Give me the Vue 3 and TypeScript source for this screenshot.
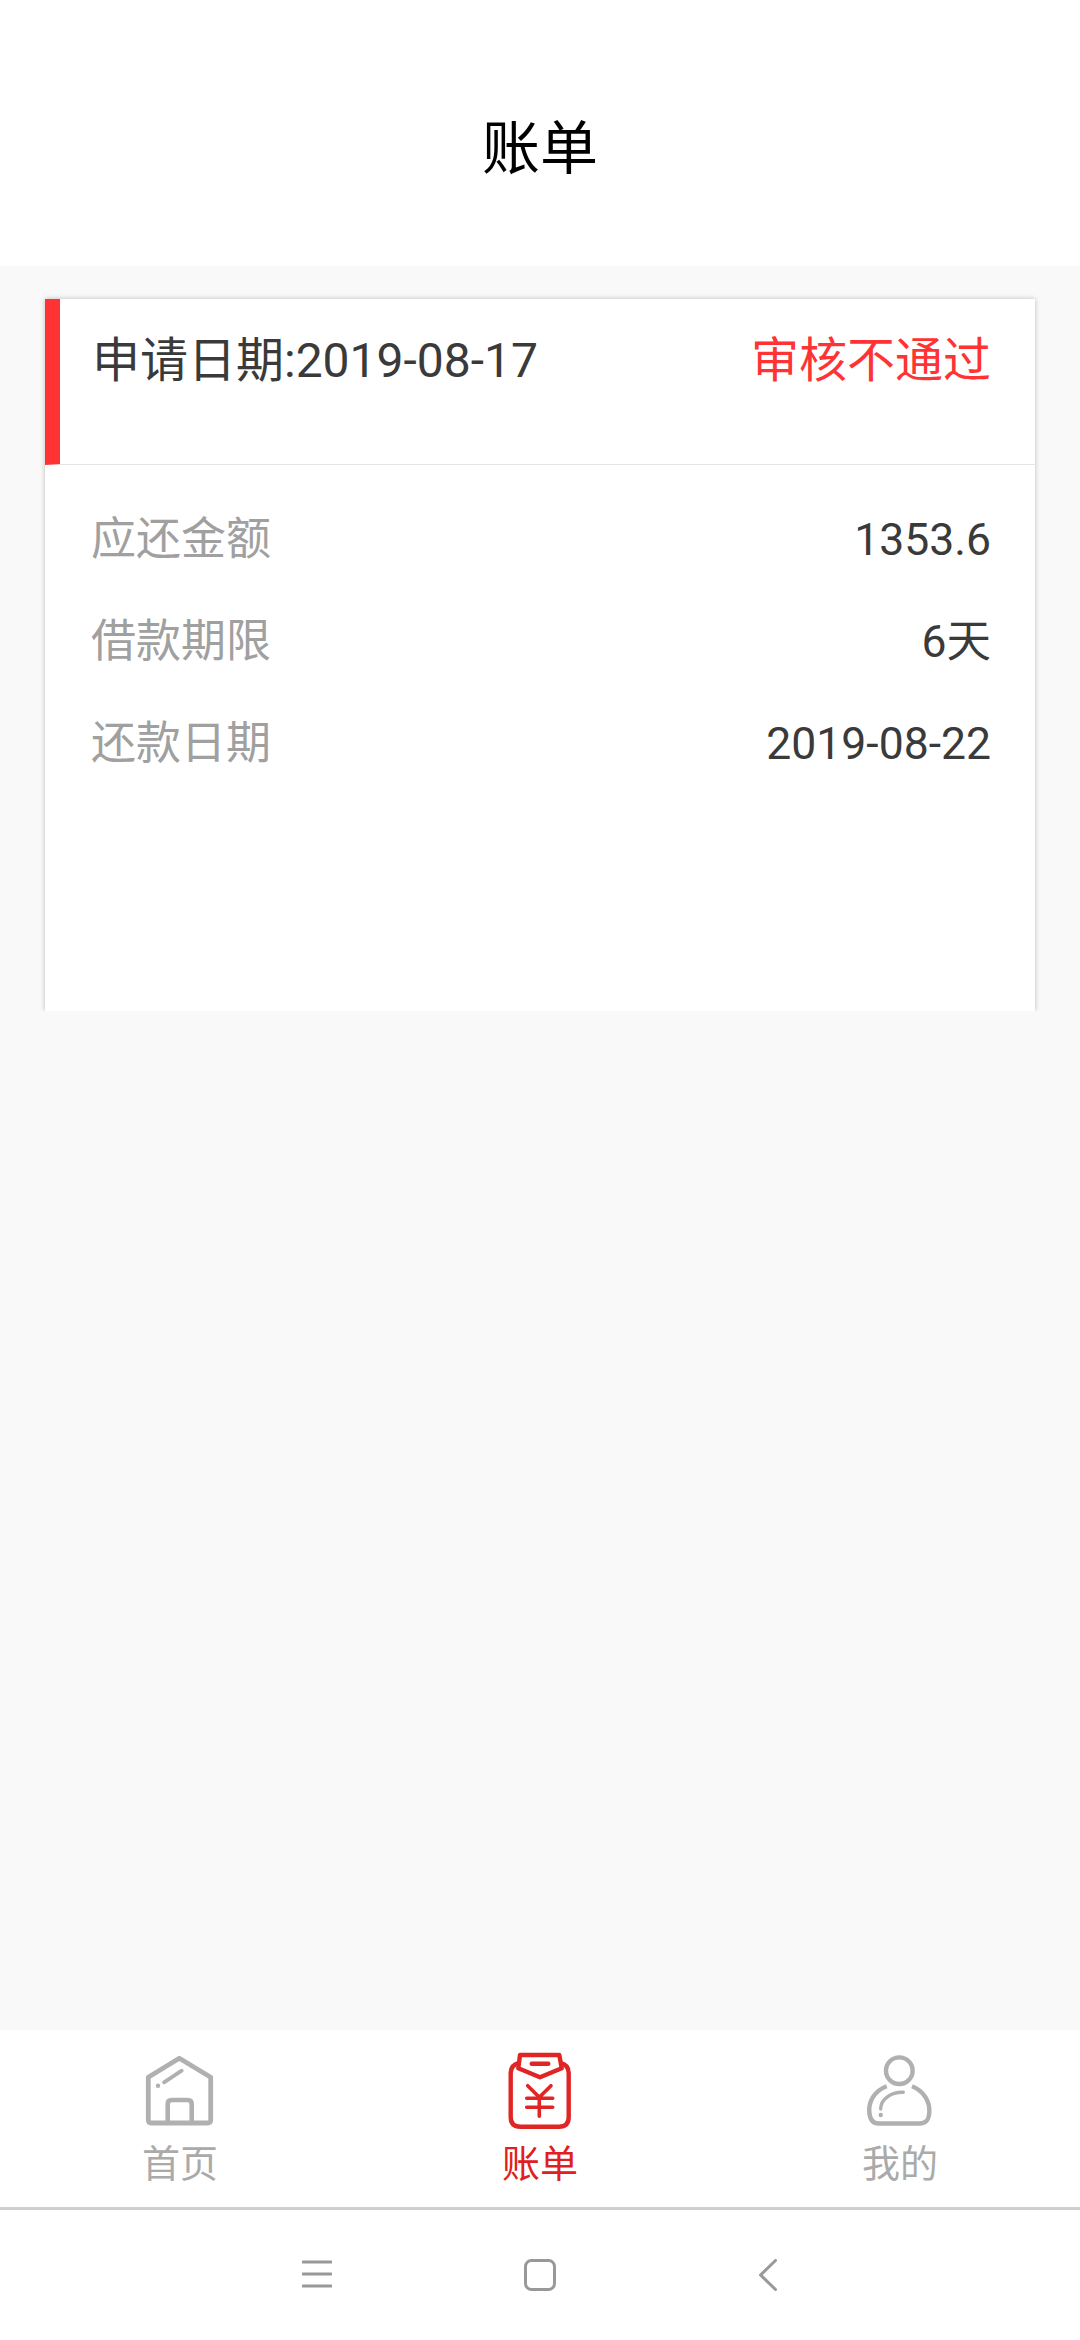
<script setup lang="ts">
const rows = [
  { label: '应还金额', value: '1353.6' },
  { label: '借款期限', value: '6天' },
  { label: '还款日期', value: '2019-08-22' },
]
</script>

<template>
  <div class="page">
    <header class="top">账单</header>
    <main class="content">
      <section class="card">
        <div class="card-head">
          <span class="date">申请日期:2019-08-17</span>
          <span class="status">审核不通过</span>
        </div>
        <div class="card-body">
          <div v-for="r in rows" :key="r.label" class="row">
            <span class="label">{{ r.label }}</span>
            <span class="value">{{ r.value }}</span>
          </div>
        </div>
      </section>
    </main>
    <nav class="tabs">
      <div class="tab">
        <svg class="icon grey" viewBox="0 0 80 80" fill="none">
          <path d="M39.3 9.3 L8.3 28.3 V71 Q8.3 74 11.3 74 H67.7 Q70.7 74 70.7 71 V28.3 Z" stroke-width="4.8" stroke-linejoin="round" />
          <path d="M27.7 74 V55 Q27.7 51 31.7 51 H47.7 Q51.7 51 51.7 55 V74" stroke-width="4.6" />
          <path d="M24 33.3 L41.7 21.7" stroke-width="3.8" stroke-linecap="round" />
          <circle cx="18" cy="36.7" r="2.2" class="dot" />
        </svg>
        <span class="tab-label">首页</span>
      </div>
      <div class="tab active">
        <svg class="icon red" viewBox="0 0 80 80" fill="none">
          <path d="M19 14 Q10.7 16 10.7 24 V68 Q10.7 77.7 20.4 77.7 H59 Q68.7 77.7 68.7 68 V24 Q68.7 16 60.5 14" stroke-width="4.4" />
          <path d="M20 6 H59.3 L61.7 19.3 L40 28.3 L18.3 19.3 Z" stroke-width="4.4" stroke-linejoin="round" />
          <path d="M31.7 14.7 H48.3" stroke-width="4.4" stroke-linecap="round" />
          <path d="M27.7 36.7 L39.3 48.3 L51 36.7 M26.7 49.3 H52.7 M26.7 58.3 H52.7 M39.3 48.3 V67.3" stroke-width="3.6" stroke-linecap="round" />
        </svg>
        <span class="tab-label">账单</span>
      </div>
      <div class="tab">
        <svg class="icon grey" viewBox="0 0 80 80" fill="none">
          <circle cx="39.3" cy="21.7" r="13.3" stroke-width="4.4" />
          <path d="M26.7 37.3 C14 42 8.5 53 9.3 63 C9.8 71 13 74.5 19 74.5 H59.5 C66 74.5 69 71 69.3 63 C70 53 64 42 52 37.3" stroke-width="4.4" />
          <path d="M20.7 60 C20.7 50 31 43 43.3 43.3" stroke-width="3.4" stroke-linecap="round" />
          <circle cx="20.7" cy="66" r="2.2" class="dot" />
        </svg>
        <span class="tab-label">我的</span>
      </div>
    </nav>
    <div class="sysnav">
      <svg class="sys menu" viewBox="0 0 30 30" fill="none">
        <path d="M1 3 H29 M1 15 H29 M1 27 H29" stroke-width="3" stroke-linecap="round" />
      </svg>
      <svg class="sys square" viewBox="0 0 32 32" fill="none">
        <rect x="1.5" y="1.5" width="29" height="29" rx="6" stroke-width="3" />
      </svg>
      <svg class="sys back" viewBox="0 0 18 32" fill="none">
        <path d="M16.5 1.5 L1.5 16 L16.5 30.5" stroke-width="3" stroke-linecap="round" stroke-linejoin="round" />
      </svg>
    </div>
  </div>
</template>

<style scoped>
.page {
  width: 1080px;
  height: 2340px;
  display: flex;
  flex-direction: column;
  background: #f9f9f9;
  font-family: Roboto, "Noto Sans CJK SC", sans-serif;
}
.top {
  height: 266px;
  flex: none;
  box-sizing: border-box;
  padding-top: 115px;
  background: #fff;
  color: #000;
  font-size: 58px;
  line-height: 68px;
  text-align: center;
}
.content {
  flex: 1;
  padding: 33px 45px 0;
}
.card {
  height: 712px;
  background: #fff;
  box-shadow: 0 0 5px rgba(0, 0, 0, 0.25);
  clip-path: inset(-10px -10px 0 -10px);
}
.card-head {
  height: 166px;
  box-sizing: border-box;
  padding: 30px 45px 0 32px;
  display: flex;
  justify-content: space-between;
  align-items: flex-start;
  border-left: 15px solid #ff3333;
  border-bottom: 1px solid #e4e4e4;
  font-size: 48px;
  line-height: 64px;
  margin-right: -1px;
}
.date {
  color: #3a3a3a;
}
.status {
  color: #ff3333;
}
.card-body {
  padding: 24px 44px 0 46px;
}
.row {
  display: flex;
  justify-content: space-between;
  height: 102px;
  font-size: 45px;
  line-height: 102px;
}
.label {
  color: #a0a0a0;
}
.value {
  color: #3a3a3a;
  font-size: 44.5px;
}
.tabs {
  height: 177px;
  flex: none;
  display: flex;
  background: #fff;
  border-bottom: 3px solid #cfcfcf;
}
.tab {
  flex: 1;
  display: flex;
  flex-direction: column;
  align-items: center;
  padding-top: 19px;
  color: #aaa;
}
.tab.active {
  color: #e02020;
}
.icon {
  width: 80px;
  height: 80px;
}
.grey {
  stroke: #b0b0b0;
}
.red {
  stroke: #e02525;
}
.dot {
  fill: #b0b0b0;
  stroke: none;
}
.tab-label {
  font-size: 38px;
  line-height: 44px;
  margin-top: 13px;
}
.sysnav {
  height: 130px;
  flex: none;
  background: #fff;
  position: relative;
}
.sys {
  position: absolute;
  stroke: #999;
}
.menu {
  left: 302px;
  top: 49px;
  width: 30px;
  height: 30px;
}
.square {
  left: 524px;
  top: 49px;
  width: 32px;
  height: 32px;
}
.back {
  left: 759px;
  top: 49px;
  width: 18px;
  height: 32px;
}
</style>
